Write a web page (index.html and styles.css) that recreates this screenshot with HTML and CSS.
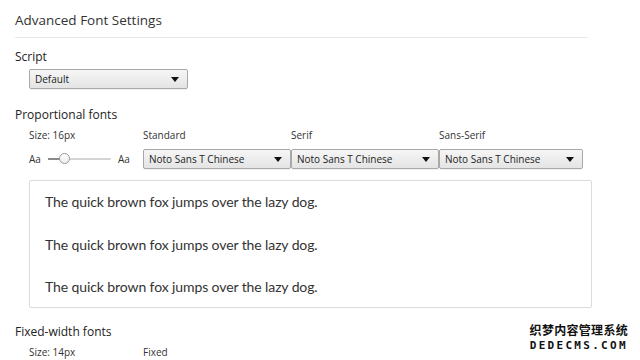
FILE: index.html
```html
<!DOCTYPE html>
<html lang="en">
<head>
    <meta charset="UTF-8">
    <title>Advanced Font Settings</title>
    <link rel="stylesheet" href="styles.css">
</head>
<body>
    <div class="page">
        <h1 class="title">Advanced Font Settings</h1>

        <div class="section">
            <h2>Script</h2>
            <div class="select script-select">Default<span class="arrow"></span></div>
        </div>

        <div class="section">
            <h2>Proportional fonts</h2>
            <div class="font-grid">
                <div class="label">Size: 16px</div>
                <div class="label">Standard</div>
                <div class="label">Serif</div>
                <div class="label">Sans-Serif</div>

                <div class="size-slider">
                    <span class="aa">Aa</span>
                    <span class="track"><span class="fill"></span><span class="thumb"></span></span>
                    <span class="aa">Aa</span>
                </div>
                <div class="select">Noto Sans T Chinese<span class="arrow"></span></div>
                <div class="select">Noto Sans T Chinese<span class="arrow"></span></div>
                <div class="select">Noto Sans T Chinese<span class="arrow"></span></div>
            </div>
            <div class="preview">
                <p>The quick brown fox jumps over the lazy dog.</p>
                <p>The quick brown fox jumps over the lazy dog.</p>
                <p>The quick brown fox jumps over the lazy dog.</p>
            </div>
        </div>

        <div class="section">
            <h2>Fixed-width fonts</h2>
            <div class="font-grid">
                <div class="label">Size: 14px</div>
                <div class="label">Fixed</div>
            </div>
        </div>
    </div>

    <div class="watermark">
        <div class="wm-cn">织梦内容管理系统</div>
        <div class="wm-en">DEDECMS.COM</div>
    </div>
</body>
</html>
```

FILE: styles.css
```css
body {
    margin: 0;
    padding: 0;
    background: #fff;
    color: #303030;
    font-family: 'Open Sans', 'Noto Sans', sans-serif;
    overflow: hidden;
}
.page {
    padding: 0 15px;
}
.title {
    width: 573px;
    margin: 0;
    padding: 10px 0 7px;
    font-size: 13.5px;
    line-height: 20px;
    font-weight: normal;
    color: #333;
    border-bottom: 1px solid #e8e8e8;
}
.section h2 {
    margin: 0;
    font-size: 12px;
    line-height: 16px;
    font-weight: normal;
    color: #222;
}
.section:nth-child(2) h2 {
    padding-top: 11px;
}
.script-select {
    width: 159px;
    margin: 4px 0 0 14px;
}
.section:nth-child(3) h2 {
    padding-top: 18px;
}
.select {
    position: relative;
    box-sizing: border-box;
    height: 20px;
    padding: 0 0 0 5px;
    font-size: 10px;
    line-height: 18px;
    color: #222;
    border: 1px solid #a8a8a8;
    border-radius: 2px;
    background: linear-gradient(to bottom, #f6f6f6, #e4e4e4);
    box-shadow: 0 1px 0 rgba(0, 0, 0, 0.05);
}
.arrow {
    position: absolute;
    right: 8px;
    top: 7px;
    width: 0;
    height: 0;
    border-left: 4px solid transparent;
    border-right: 4px solid transparent;
    border-top: 5px solid #111;
}
.font-grid {
    display: grid;
    grid-template-columns: 114px 148px 148px 144px;
    row-gap: 6px;
    margin: 4px 0 0 14px;
}
.label {
    font-size: 10px;
    line-height: 16px;
    color: #333;
}
.size-slider {
    display: flex;
    align-items: center;
    height: 20px;
    font-size: 10px;
    color: #333;
}
.track {
    position: relative;
    width: 63px;
    height: 2px;
    margin: 0 7px 0 7px;
    background: #d4d4d4;
    border-radius: 1px;
}
.fill {
    position: absolute;
    left: 0;
    top: 0;
    width: 12px;
    height: 2px;
    background: #8a8a8a;
}
.thumb {
    position: absolute;
    left: 11px;
    top: -5px;
    box-sizing: border-box;
    width: 11px;
    height: 11px;
    border: 1px solid #9a9a9a;
    border-radius: 50%;
    background: linear-gradient(to bottom, #ffffff, #ececec);
}
.preview {
    box-sizing: border-box;
    width: 563px;
    height: 128px;
    margin: 11px 0 0 14px;
    padding: 0 15px;
    border: 1px solid #dcdcdc;
    border-radius: 2px;
}
.preview p {
    margin: 0;
    font-family: 'Lato', sans-serif;
    font-size: 14px;
    letter-spacing: -0.1px;
    line-height: 42.5px;
    color: #333;
}
.section:nth-child(4) h2 {
    padding-top: 16px;
}
.section:nth-child(4) .font-grid {
    margin-top: 4px;
}
.watermark {
    position: absolute;
    right: 12px;
    bottom: 8px;
    text-align: center;
    color: #111;
    text-shadow: 1px 0 0 #fff, -1px 0 0 #fff, 0 1px 0 #fff, 0 -1px 0 #fff, 1px 1px 0 #fff, -1px -1px 0 #fff;
}
.wm-cn {
    font-family: 'Noto Sans CJK SC', sans-serif;
    font-weight: bold;
    font-size: 12px;
    line-height: 14px;
    letter-spacing: 0.3px;
}
.wm-en {
    margin-top: 3px;
    font-family: 'DejaVu Sans Mono', monospace;
    font-weight: bold;
    font-size: 11px;
    line-height: 12px;
    letter-spacing: 2.3px;
}
```
